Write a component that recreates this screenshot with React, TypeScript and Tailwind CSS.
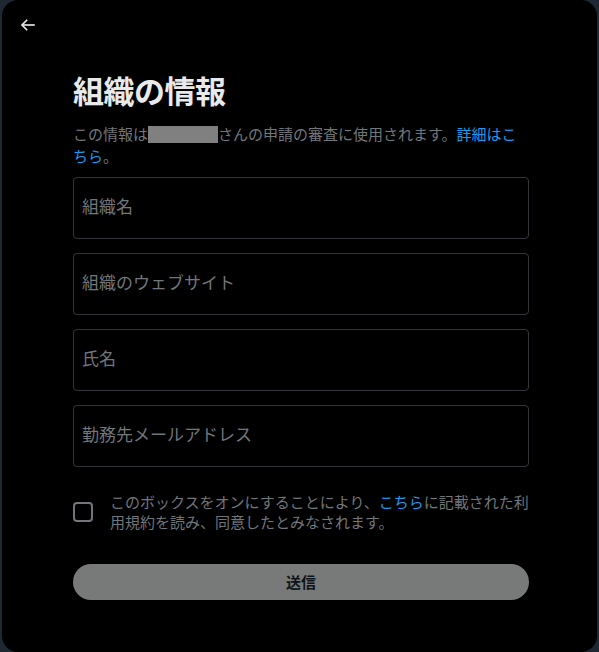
import React from 'react';

const fields = ['組織名', '組織のウェブサイト', '氏名', '勤務先メールアドレス'];

export default function App() {
  return (
    <div
      className="min-h-[652px] w-[599px] bg-[#1e2732] px-[2px]"
      style={{ fontFamily: '"Noto Sans CJK JP", "Noto Sans", sans-serif' }}
    >
      <div className="h-[652px] w-full rounded-2xl bg-black text-[#e7e9ea]">
        <div className="flex h-[50px] items-start pl-[17px] pt-[16px]">
          <svg viewBox="0 0 24 24" className="h-[18px] w-[18px]" fill="none" stroke="#e7e9ea" strokeWidth="2.2" strokeLinecap="butt">
            <path d="M21 12H4" />
            <path d="M11 5l-7 7 7 7" />
          </svg>
        </div>

        <div className="ml-[71px] w-[456px]">
          <h1 className="mt-[22px] text-[31px] font-bold leading-[36px] tracking-[-0.5px]">組織の情報</h1>

          <p className="mt-[15px] text-[15px] leading-[22px] text-[#71767b]">
            <span className="whitespace-nowrap">
              この情報は
              <span className="inline-block h-[17px] w-[70px] translate-y-[3px] bg-[#808080]" />
              さんの申請の審査に使用されます。
              <span className="text-[#1d9bf0]">詳細はこ</span>
            </span>
            <br />
            <span className="text-[#1d9bf0]">ちら</span>。
          </p>

          <div className="mt-[10px] flex flex-col gap-[14px]">
            {fields.map(f => (
              <div
                key={f}
                className="flex h-[62px] items-center rounded-[4px] border border-[#333639] pb-[4px] pl-[8px] text-[17px] text-[#71767b]"
              >
                {f}
              </div>
            ))}
          </div>

          <div className="mt-[25px] flex items-center gap-[17px]">
            <div className="h-[20px] w-[20px] shrink-0 rounded-[4px] border-2 border-[#71767b]" />
            <p className="text-[15px] leading-[20px] text-[#71767b]">
              <span className="whitespace-nowrap">
                このボックスをオンにすることにより、<span className="text-[#1d9bf0]">こちら</span>に記載された利
              </span>
              <br />
              用規約を読み、同意したとみなされます。
            </p>
          </div>

          <button className="mt-[32px] flex h-[36px] w-full items-center justify-center rounded-full bg-[#787a7a] text-[15px] font-bold text-[#0f1419]">
            送信
          </button>
        </div>
      </div>
    </div>
  );
}
